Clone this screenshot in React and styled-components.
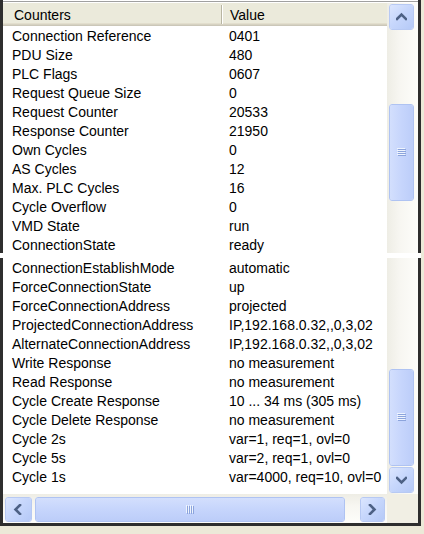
import React from 'react';
import styled, { createGlobalStyle } from 'styled-components';

const GlobalStyle = createGlobalStyle`
  html, body { margin: 0; padding: 0; background: #ECE9D8; }
  body { font-family: "Liberation Sans", Arial, sans-serif; }
`;

const Screen = styled.div`
  width: 424px;
  height: 534px;
  background: #ECE9D8;
  overflow: hidden;
`;

const Window = styled.div`
  width: 421px;
  display: flex;
  flex-direction: column;
`;

const Panel = styled.div`
  box-sizing: border-box;
  height: ${p => p.$h}px;
  background: #fff;
  border-left: 3px solid #2e2e2e;
  border-right: 3px solid #2e2e2e;
  border-bottom: ${p => (p.$bottom ? '3px solid #2e2e2e' : 'none')};
  padding-top: ${p => (p.$top ? 3 : 0)}px;
  display: flex;
  flex-direction: column;
  overflow: hidden;
  position: relative;
  &::before {
    content: '';
    display: ${p => (p.$top ? 'block' : 'none')};
    position: absolute;
    left: 0; right: 0; top: 1px;
    height: 1px;
    background: #a0a0a0;
  }
`;

const Gap = styled.div`
  height: 5px;
  background: #fff;
`;

const MainRow = styled.div`
  display: flex;
  height: ${p => (p.$h ? `${p.$h}px` : 'auto')};
  flex: ${p => (p.$h ? 'none' : '1')};
  min-height: 0;
`;

const List = styled.div`
  width: 384px;
  display: flex;
  flex-direction: column;
  overflow: hidden;
`;

const Header = styled.div`
  display: grid;
  grid-template-columns: 219px 1fr;
  height: 23px;
  box-sizing: border-box;
  background: #EBEADB;
  box-shadow: inset 0 -1px 0 #CBC7B8, inset 0 -2px 0 #D6D2C2, inset 0 -3px 0 #E2DECD;
  flex: none;
`;

const HeaderCell = styled.div`
  padding-left: ${p => p.$pad}px;
  font-size: 14px;
  line-height: 24px;
  color: #000;
  position: relative;
  white-space: nowrap;
  &::after {
    content: '';
    display: ${p => (p.$sep ? 'block' : 'none')};
    position: absolute;
    right: 0; top: 2px; bottom: 3px;
    width: 1px;
    background: #B8B5A2;
    box-shadow: 1px 0 0 #fff;
  }
`;

const Row = styled.div`
  display: grid;
  grid-template-columns: 219px 1fr;
  height: 19px;
  box-sizing: border-box;
  padding-top: 1px;
  flex: none;
  font-size: 14px;
  line-height: 19px;
  color: #000;
`;

const Cell = styled.div`
  padding-left: ${p => p.$pad}px;
  white-space: nowrap;
  overflow: hidden;
`;

const VScroll = styled.div`
  width: 31px;
  flex: none;
  display: flex;
  flex-direction: column;
  background: linear-gradient(to right, #EEEDE5 0%, #F7F6F1 40%, #FDFDFA 100%);
`;

const Spacer = styled.div`
  height: ${p => (p.$h ? `${p.$h}px` : 'auto')};
  width: ${p => (p.$w ? `${p.$w}px` : 'auto')};
  flex: ${p => (p.$h || p.$w ? 'none' : '1')};
`;

const Btn = styled.div`
  box-sizing: border-box;
  width: ${p => p.$w || 25}px;
  height: ${p => p.$hh || 26}px;
  margin-left: ${p => p.$ml || 0}px;
  margin-top: ${p => p.$mt || 0}px;
  flex: none;
  border-radius: 3px;
  border: 1px solid #fff;
  outline: 1px solid #B7C9F3;
  outline-offset: -1px;
  background: linear-gradient(135deg, #DCE6FE 0%, #C7D7FC 45%, #B5C9F7 100%);
  display: flex;
  align-items: center;
  justify-content: center;
`;

const Thumb = styled.div`
  box-sizing: border-box;
  flex: none;
  width: ${p => p.$w}px;
  height: ${p => p.$hh}px;
  margin-left: ${p => p.$ml || 0}px;
  border-radius: 3px;
  border: 1px solid #fff;
  outline: 1px solid #AFC3F2;
  outline-offset: -1px;
  background: ${p => (p.$horiz
    ? 'linear-gradient(to bottom, #D3DFFD 0%, #C6D5FC 50%, #BCCDF9 100%)'
    : 'linear-gradient(to right, #D3DFFD 0%, #C6D5FC 50%, #BCCDF9 100%)')};
  display: flex;
  align-items: center;
  justify-content: center;
`;

const HScrollRow = styled.div`
  display: flex;
  height: 29px;
  flex: none;
`;

const HScroll = styled.div`
  width: 384px;
  display: flex;
  align-items: flex-start;
  padding-top: 3px;
  box-sizing: border-box;
  background: linear-gradient(to bottom, #EEEDE5 0%, #F7F6F1 40%, #FDFDFA 100%);
`;

const Corner = styled.div`
  flex: 1;
  background: #F1EFE4;
`;

const Chevron = ({ dir }) => {
  const pts = {
    up: '1,7 5.5,2.5 10,7',
    down: '1,3 5.5,7.5 10,3',
    left: '7,1 2.5,5.5 7,10',
    right: '3,1 7.5,5.5 3,10',
  }[dir];
  return (
    <svg width="11" height="11" viewBox="0 0 11 11">
      <polyline points={pts} fill="none" stroke="#4D6185" strokeWidth="2.6" strokeLinecap="square" />
    </svg>
  );
};

const GripV = () => (
  <svg width="9" height="9" viewBox="0 0 9 9">
    {[0, 2, 4, 6].map(y => (
      <g key={y}>
        <rect x="0" y={y} width="8" height="1" fill="#EEF4FE" />
        <rect x="1" y={y + 1} width="8" height="1" fill="#8CA4DC" />
      </g>
    ))}
  </svg>
);

const GripH = () => (
  <svg width="9" height="9" viewBox="0 0 9 9">
    {[0, 2, 4, 6].map(x => (
      <g key={x}>
        <rect x={x} y="0" width="1" height="8" fill="#EEF4FE" />
        <rect x={x + 1} y="1" width="1" height="8" fill="#8CA4DC" />
      </g>
    ))}
  </svg>
);

const topRows = [
  ['Connection Reference', '0401'],
  ['PDU Size', '480'],
  ['PLC Flags', '0607'],
  ['Request Queue Size', '0'],
  ['Request Counter', '20533'],
  ['Response Counter', '21950'],
  ['Own Cycles', '0'],
  ['AS Cycles', '12'],
  ['Max. PLC Cycles', '16'],
  ['Cycle Overflow', '0'],
  ['VMD State', 'run'],
  ['ConnectionState', 'ready'],
];

const bottomRows = [
  ['ConnectionEstablishMode', 'automatic'],
  ['ForceConnectionState', 'up'],
  ['ForceConnectionAddress', 'projected'],
  ['ProjectedConnectionAddress', 'IP,192.168.0.32,,0,3,02'],
  ['AlternateConnectionAddress', 'IP,192.168.0.32,,0,3,02'],
  ['Write Response', 'no measurement'],
  ['Read Response', 'no measurement'],
  ['Cycle Create Response', '10 ... 34 ms (305 ms)'],
  ['Cycle Delete Response', 'no measurement'],
  ['Cycle 2s', 'var=1, req=1, ovl=0'],
  ['Cycle 5s', 'var=2, req=1, ovl=0'],
  ['Cycle 1s', 'var=4000, req=10, ovl=0'],
];

const Rows = ({ data }) =>
  data.map(([k, v]) => (
    <Row key={k}>
      <Cell $pad={9}>{k}</Cell>
      <Cell $pad={7}>{v}</Cell>
    </Row>
  ));

export default function App() {
  return (
    <>
      <GlobalStyle />
      <Screen>
        <Window>
          <Panel $h={253} $top>
            <MainRow>
              <List>
                <Header>
                  <HeaderCell $pad={11} $sep>Counters</HeaderCell>
                  <HeaderCell $pad={8}>Value</HeaderCell>
                </Header>
                <Rows data={topRows} />
              </List>
              <VScroll>
                <Btn $ml={2} $mt={1}><Chevron dir="up" /></Btn>
                <Spacer $h={74} />
                <Thumb $w={25} $hh={97} $ml={2}><GripV /></Thumb>
                <Spacer />
              </VScroll>
            </MainRow>
          </Panel>
          <Gap />
          <Panel $h={268} $bottom>
            <MainRow $h={236}>
              <List>
                <Rows data={bottomRows} />
              </List>
              <VScroll>
                <Spacer $h={111} />
                <Thumb $w={25} $hh={97} $ml={2}><GripV /></Thumb>
                <Spacer />
                <Btn $ml={2}><Chevron dir="down" /></Btn>
                <Spacer $h={1} />
              </VScroll>
            </MainRow>
            <HScrollRow>
              <HScroll>
                <Btn $w={27} $hh={25} $ml={2}><Chevron dir="left" /></Btn>
                <Thumb $horiz $w={310} $hh={25} $ml={3}><GripH /></Thumb>
                <Spacer $w={15} />
                <Btn $w={25} $hh={25}><Chevron dir="right" /></Btn>
              </HScroll>
              <Corner />
            </HScrollRow>
          </Panel>
        </Window>
      </Screen>
    </>
  );
}
